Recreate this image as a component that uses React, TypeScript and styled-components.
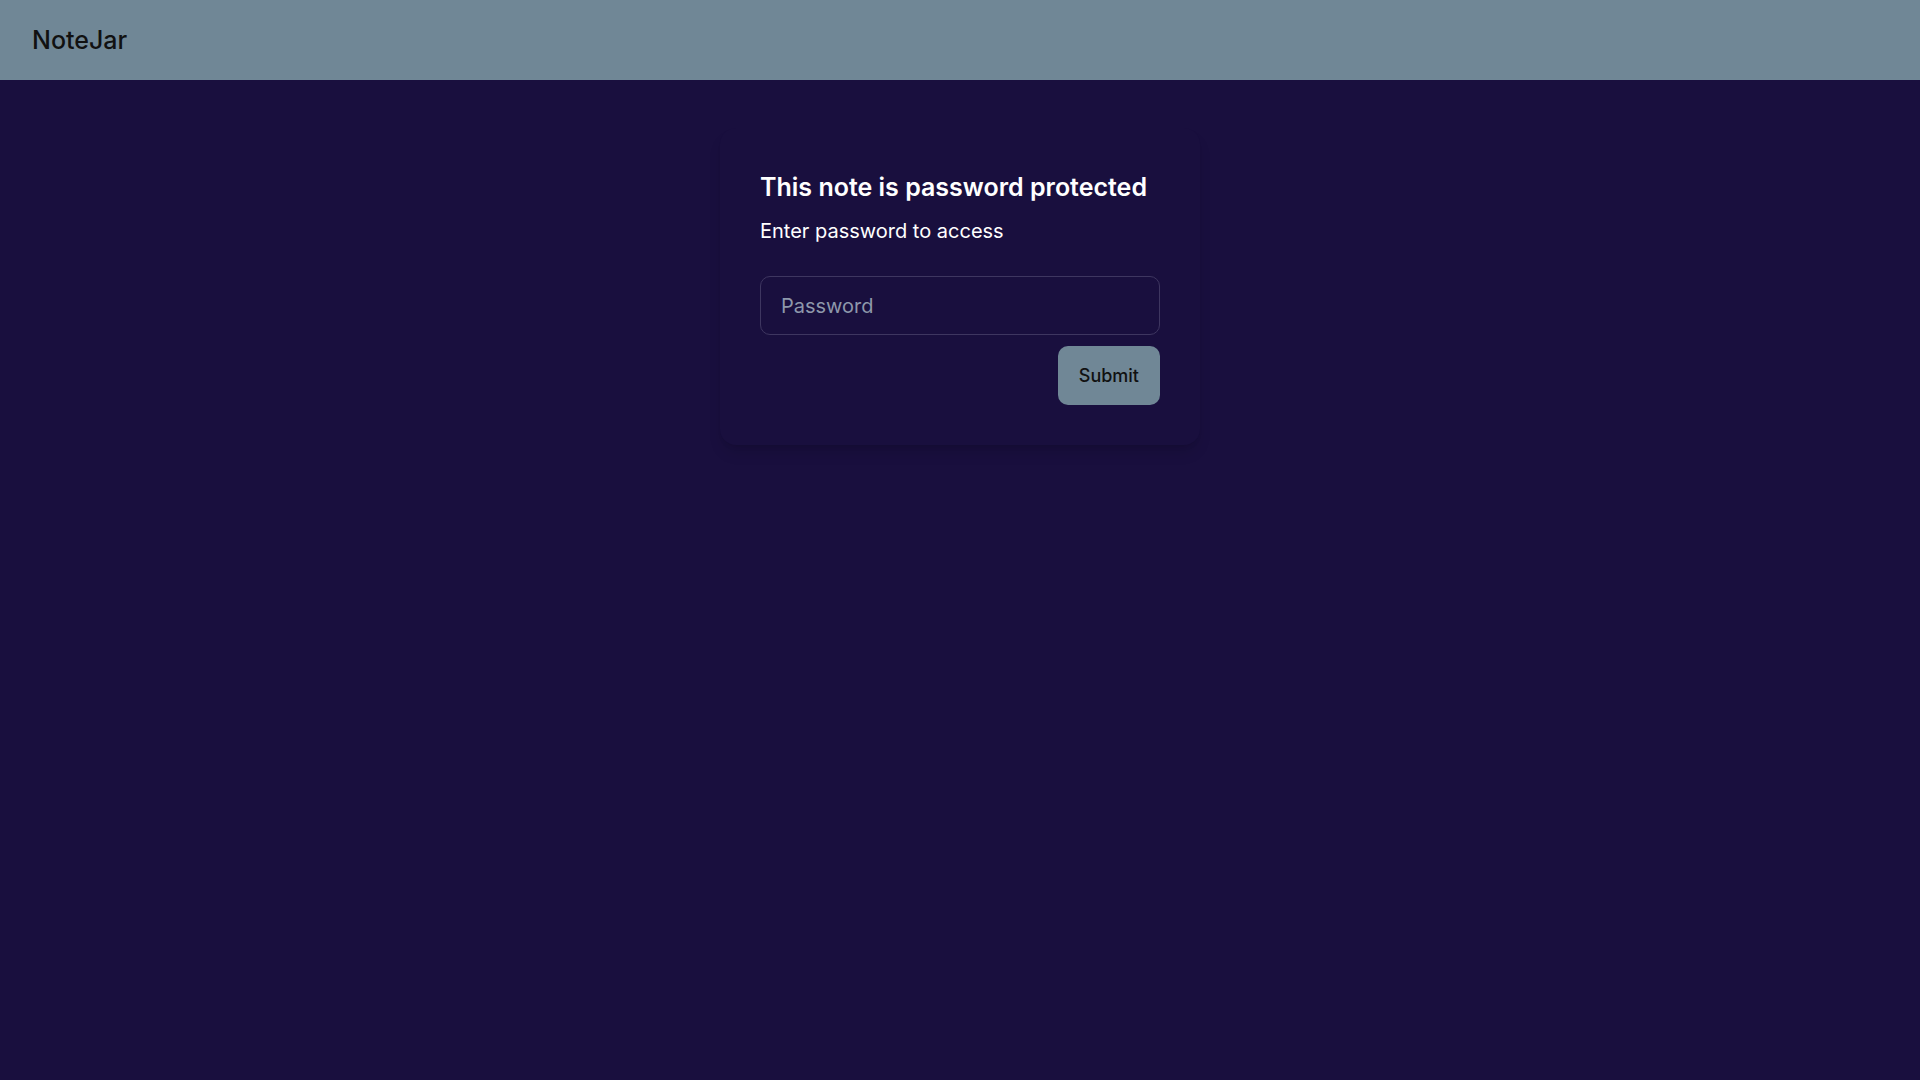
import React from "react";
import styled, { createGlobalStyle } from "styled-components";

const GlobalStyle = createGlobalStyle`
  html, body {
    margin: 0;
    padding: 0;
    background: #190f3e;
    font-family: Inter, "Noto Sans", sans-serif;
  }
  * { box-sizing: border-box; }
`;

const Page = styled.div`
  min-height: 100vh;
  background: #190f3e;
  display: flex;
  flex-direction: column;
`;

const Header = styled.header`
  height: 80px;
  background: #708796;
  display: flex;
  align-items: center;
  padding: 0 32px;
`;

const Brand = styled.div`
  font-size: 25px;
  font-weight: 500;
  color: #111111;
`;

const Main = styled.main`
  display: flex;
  justify-content: center;
  padding-top: 48px;
`;

const Card = styled.form`
  width: 480px;
  padding: 40px;
  border-radius: 16px;
  background: #190f3e;
  box-shadow: 0 10px 15px -3px rgba(0, 0, 0, 0.12), 0 4px 6px -4px rgba(0, 0, 0, 0.12);
  display: flex;
  flex-direction: column;
`;

const Title = styled.h2`
  margin: 0;
  font-size: 25px;
  line-height: 38px;
  font-weight: 600;
  color: #ffffff;
`;

const Subtitle = styled.p`
  margin: 10px 0 30px;
  font-size: 20px;
  line-height: 30px;
  color: #ffffff;
`;

const Input = styled.input`
  height: 59px;
  width: 100%;
  padding: 0 20px;
  border: 1px solid #3e3660;
  border-radius: 10px;
  background: transparent;
  color: #ffffff;
  font-family: inherit;
  font-size: 20px;
  outline: none;
  &::placeholder {
    color: #8e98ab;
  }
`;

const Actions = styled.div`
  display: flex;
  justify-content: flex-end;
  margin-top: 11px;
`;

const Button = styled.button`
  height: 59px;
  padding: 0 21px;
  border: none;
  border-radius: 10px;
  background: #708796;
  color: #111111;
  font-family: inherit;
  font-size: 18px;
  font-weight: 500;
  cursor: pointer;
`;

export default function App() {
  return (
    <>
      <GlobalStyle />
      <Page>
        <Header>
          <Brand>NoteJar</Brand>
        </Header>
        <Main>
          <Card onSubmit={(e) => e.preventDefault()}>
            <Title>This note is password protected</Title>
            <Subtitle>Enter password to access</Subtitle>
            <Input type="password" placeholder="Password" />
            <Actions>
              <Button type="submit">Submit</Button>
            </Actions>
          </Card>
        </Main>
      </Page>
    </>
  );
}
